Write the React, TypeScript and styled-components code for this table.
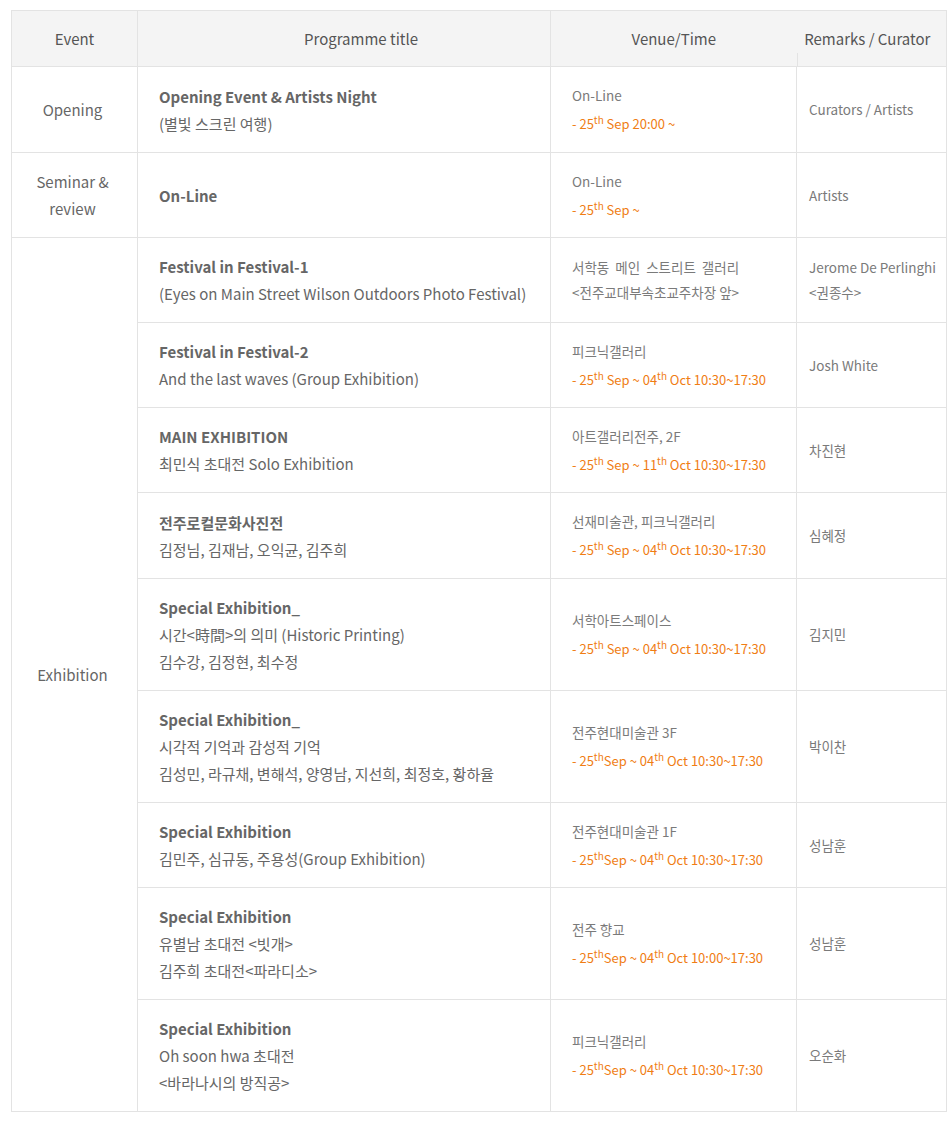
import React from "react";
import styled, { createGlobalStyle } from "styled-components";

const Global = createGlobalStyle`
  html, body { margin: 0; padding: 0; background: #fff; }
  body { font-family: "Noto Sans CJK KR", "Noto Sans", sans-serif; }
`;

const Page = styled.div`
  padding: 10px 6px 24px 11px;
`;

const Table = styled.table`
  width: 935px;
  border-collapse: collapse;
  table-layout: fixed;
  font-family: "Noto Sans CJK KR", "Noto Sans", sans-serif;
`;

const HeadCell = styled.th<{ $shift?: number; $open?: "left" | "right"; $right?: number }>`
  height: 55px;
  padding: 0 ${(p) => p.$right ?? 0}px 0 ${(p) => p.$shift ?? 0}px;
  background: #f4f4f4;
  border: 1px solid #e3e3e3;
  ${(p) => (p.$open === "left" ? "border-left: none;" : "")}
  ${(p) => (p.$open === "right" ? "border-right: none;" : "")}
  color: #555;
  font-size: 15px;
  font-weight: 400;
  text-align: center;
  vertical-align: middle;
  position: relative;
  white-space: nowrap;
`;

const HeadTick = styled.span`
  position: absolute;
  left: 0;
  bottom: 0;
  width: 1px;
  height: 13px;
  background: #e3e3e3;
`;

const BodyRow = styled.tr<{ $h: number }>`
  height: ${(p) => p.$h}px;
`;

const Cell = styled.td`
  border: 1px solid #e3e3e3;
  vertical-align: middle;
`;

const EventCell = styled(Cell)`
  text-align: center;
  color: #666;
  font-size: 15px;
  line-height: 27px;
  padding: 0 12px 0 8px;
`;

const TitleCell = styled(Cell)`
  padding: 14px 12px 14px 21px;
  color: #666;
  font-size: 15px;
  line-height: 27px;
`;

const TitleLine = styled.div<{ $bold?: boolean }>`
  font-weight: ${(p) => (p.$bold ? 700 : 400)};
  white-space: nowrap;
`;

const VenueCell = styled(Cell)`
  padding: 8px 8px 8px 21px;
  font-size: 13.5px;
  color: #7a7a7a;
`;

const VenueLine = styled.div<{ $wide?: boolean }>`
  line-height: 25px;
  white-space: nowrap;
  word-spacing: ${(p) => (p.$wide ? "3px" : "normal")};
`;

const Schedule = styled.div`
  line-height: 25px;
  margin-top: 3px;
  font-size: 13px;
  color: #f07d14;
  white-space: nowrap;
`;

const Sup = styled.sup`
  font-size: 10px;
  line-height: 0;
  vertical-align: 5px;
`;

const RemarkCell = styled(Cell)`
  padding: 8px 4px 8px 12px;
  font-size: 13.5px;
  color: #7a7a7a;
`;

const RemarkLine = styled.div`
  line-height: 25px;
  white-space: nowrap;
`;

type Row = {
  event?: { lines: string[]; span: number };
  title: string[];
  venue: string[];
  wideVenue?: boolean;
  schedule?: React.ReactNode;
  remarks: string[];
};

const th = <Sup>th</Sup>;

const range = (start: string, tight: boolean) => (
  <>
    - 25{th}
    {tight ? "" : " "}Sep ~ 04{th} Oct {start}~17:30
  </>
);

const rows: Row[] = [
  {
    event: { lines: ["Opening"], span: 1 },
    title: ["Opening Event & Artists Night", "(별빛 스크린 여행)"],
    venue: ["On-Line"],
    schedule: <>- 25{th} Sep 20:00 ~</>,
    remarks: ["Curators / Artists"],
  },
  {
    event: { lines: ["Seminar &", "review"], span: 1 },
    title: ["On-Line"],
    venue: ["On-Line"],
    schedule: <>- 25{th} Sep ~</>,
    remarks: ["Artists"],
  },
  {
    event: { lines: ["Exhibition"], span: 9 },
    title: ["Festival in Festival-1", "(Eyes on Main Street Wilson Outdoors Photo Festival)"],
    venue: ["서학동 메인 스트리트 갤러리", "<전주교대부속초교주차장 앞>"],
    wideVenue: true,
    remarks: ["Jerome De Perlinghi", "<권종수>"],
  },
  {
    title: ["Festival in Festival-2", "And the last waves (Group Exhibition)"],
    venue: ["피크닉갤러리"],
    schedule: range("10:30", false),
    remarks: ["Josh White"],
  },
  {
    title: ["MAIN EXHIBITION", "최민식 초대전 Solo Exhibition"],
    venue: ["아트갤러리전주, 2F"],
    schedule: (
      <>
        - 25{th} Sep ~ 11{th} Oct 10:30~17:30
      </>
    ),
    remarks: ["차진현"],
  },
  {
    title: ["전주로컬문화사진전", "김정님, 김재남, 오익균, 김주희"],
    venue: ["선재미술관, 피크닉갤러리"],
    schedule: range("10:30", false),
    remarks: ["심혜정"],
  },
  {
    title: ["Special Exhibition_", "시간<時間>의 의미 (Historic Printing)", "김수강, 김정현, 최수정"],
    venue: ["서학아트스페이스"],
    schedule: range("10:30", false),
    remarks: ["김지민"],
  },
  {
    title: ["Special Exhibition_", "시각적 기억과 감성적 기억", "김성민, 라규채, 변해석, 양영남, 지선희, 최정호, 황하율"],
    venue: ["전주현대미술관 3F"],
    schedule: range("10:30", true),
    remarks: ["박이찬"],
  },
  {
    title: ["Special Exhibition", "김민주, 심규동, 주용성(Group Exhibition)"],
    venue: ["전주현대미술관 1F"],
    schedule: range("10:30", true),
    remarks: ["성남훈"],
  },
  {
    title: ["Special Exhibition", "유별남 초대전 <빗개>", "김주희 초대전<파라디소>"],
    venue: ["전주 향교"],
    schedule: range("10:00", true),
    remarks: ["성남훈"],
  },
  {
    title: ["Special Exhibition", "Oh soon hwa 초대전", "<바라나시의 방직공>"],
    venue: ["피크닉갤러리"],
    schedule: range("10:30", true),
    remarks: ["오순화"],
  },
];

const rowHeight = (r: Row, i: number) =>
  r.title.length > 2 ? 112 : i === 0 || i === 5 ? 86 : 85;

export default function App() {
  return (
    <Page>
      <Global />
      <Table>
        <colgroup>
          <col style={{ width: 126 }} />
          <col style={{ width: 413 }} />
          <col style={{ width: 246 }} />
          <col style={{ width: 150 }} />
        </colgroup>
        <thead>
          <tr>
            <HeadCell>Event</HeadCell>
            <HeadCell $shift={34}>Programme title</HeadCell>
            <HeadCell $open="right">Venue/Time</HeadCell>
            <HeadCell $open="left" $right={8}>
              <HeadTick />
              Remarks / Curator
            </HeadCell>
          </tr>
        </thead>
        <tbody>
          {rows.map((r, i) => (
            <BodyRow key={i} $h={rowHeight(r, i)}>
              {r.event && (
                <EventCell rowSpan={r.event.span}>
                  {r.event.lines.map((l) => (
                    <div key={l}>{l}</div>
                  ))}
                </EventCell>
              )}
              <TitleCell>
                {r.title.map((l, j) => (
                  <TitleLine key={j} $bold={j === 0}>
                    {l}
                  </TitleLine>
                ))}
              </TitleCell>
              <VenueCell>
                {r.venue.map((l, j) => (
                  <VenueLine key={j} $wide={r.wideVenue && j === 0}>
                    {l}
                  </VenueLine>
                ))}
                {r.schedule && <Schedule>{r.schedule}</Schedule>}
              </VenueCell>
              <RemarkCell>
                {r.remarks.map((l, j) => (
                  <RemarkLine key={j}>{l}</RemarkLine>
                ))}
              </RemarkCell>
            </BodyRow>
          ))}
        </tbody>
      </Table>
    </Page>
  );
}
